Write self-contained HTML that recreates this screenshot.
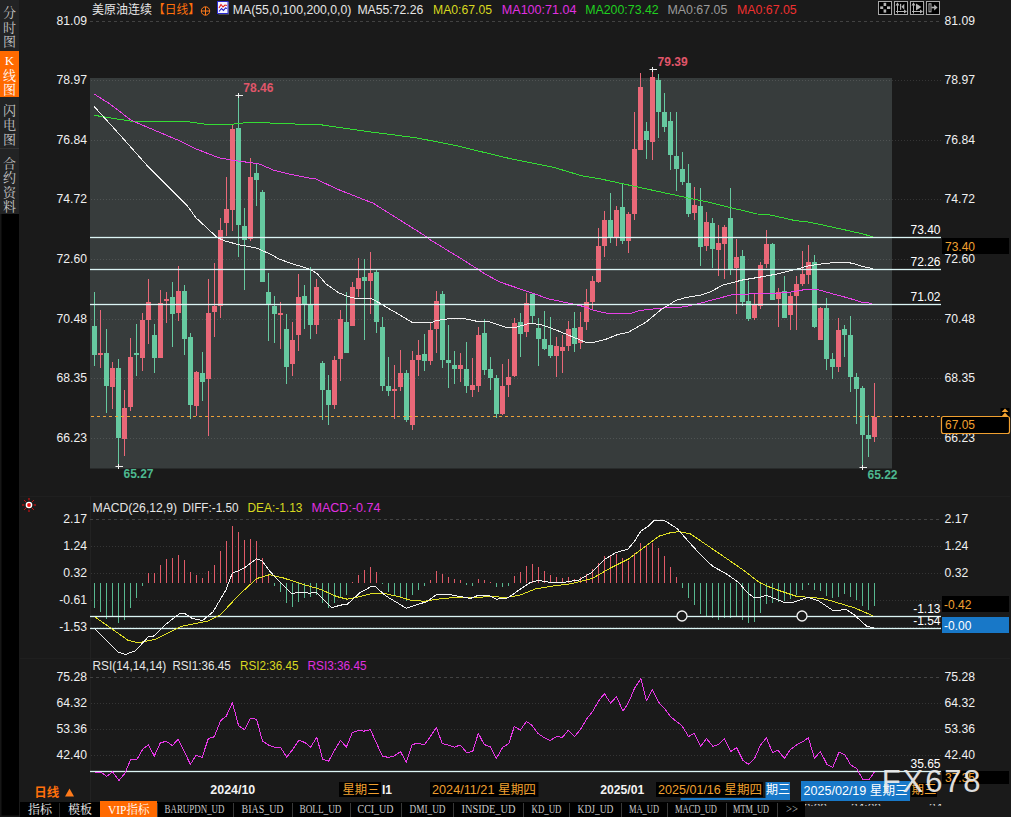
<!DOCTYPE html>
<html lang="zh"><head><meta charset="utf-8"><title>美原油连续 日线</title>
<style>
html,body{margin:0;padding:0;background:#1a1a1a;overflow:hidden}
svg{display:block}
text{font-family:"Liberation Sans","Noto Sans CJK SC",sans-serif;white-space:pre}
</style></head><body>
<svg width="1011" height="817" viewBox="0 0 1011 817">
<defs><clipPath id="cb"><rect x="780" y="804" width="231" height="1.8"/></clipPath></defs>
<rect x="0" y="0" width="1011" height="817" fill="#1a1a1a" />
<rect x="0" y="0" width="19" height="214" fill="#222324" />
<rect x="0" y="214" width="19" height="603" fill="#161616" />
<rect x="1.5" y="214" width="17.5" height="601.5" fill="#000" />
<rect x="0" y="51" width="19" height="46" fill="#ff6a00" />
<rect x="0" y="148" width="19" height="1" fill="#333" />
<text x="9.5" y="17" fill="#c8c8c8" font-size="13" text-anchor="middle" style="font-family:'Liberation Serif','Noto Serif CJK SC',serif" >分</text>
<text x="9.5" y="31.5" fill="#c8c8c8" font-size="13" text-anchor="middle" style="font-family:'Liberation Serif','Noto Serif CJK SC',serif" >时</text>
<text x="9.5" y="45.5" fill="#c8c8c8" font-size="13" text-anchor="middle" style="font-family:'Liberation Serif','Noto Serif CJK SC',serif" >图</text>
<text x="9.5" y="65" fill="#fff" font-size="13" text-anchor="middle" style="font-family:'Liberation Serif','Noto Serif CJK SC',serif" >K</text>
<text x="9.5" y="79.5" fill="#fff" font-size="13" text-anchor="middle" style="font-family:'Liberation Serif','Noto Serif CJK SC',serif" >线</text>
<text x="9.5" y="93.5" fill="#fff" font-size="13" text-anchor="middle" style="font-family:'Liberation Serif','Noto Serif CJK SC',serif" >图</text>
<text x="9.5" y="114.5" fill="#c8c8c8" font-size="13" text-anchor="middle" style="font-family:'Liberation Serif','Noto Serif CJK SC',serif" >闪</text>
<text x="9.5" y="129" fill="#c8c8c8" font-size="13" text-anchor="middle" style="font-family:'Liberation Serif','Noto Serif CJK SC',serif" >电</text>
<text x="9.5" y="143.5" fill="#c8c8c8" font-size="13" text-anchor="middle" style="font-family:'Liberation Serif','Noto Serif CJK SC',serif" >图</text>
<text x="9.5" y="167.5" fill="#c8c8c8" font-size="13" text-anchor="middle" style="font-family:'Liberation Serif','Noto Serif CJK SC',serif" >合</text>
<text x="9.5" y="182" fill="#c8c8c8" font-size="13" text-anchor="middle" style="font-family:'Liberation Serif','Noto Serif CJK SC',serif" >约</text>
<text x="9.5" y="196.5" fill="#c8c8c8" font-size="13" text-anchor="middle" style="font-family:'Liberation Serif','Noto Serif CJK SC',serif" >资</text>
<text x="9.5" y="211" fill="#c8c8c8" font-size="13" text-anchor="middle" style="font-family:'Liberation Serif','Noto Serif CJK SC',serif" >料</text>
<rect x="90" y="78" width="802" height="390.5" fill="#373c3c" />
<line x1="90" y1="21.5" x2="941" y2="21.5" stroke="#424242" stroke-width="1" stroke-dasharray="3 3" shape-rendering="crispEdges"/>
<line x1="91" y1="80.5" x2="942" y2="80.5" stroke="rgba(255,255,255,0.12)" stroke-width="1" stroke-dasharray="1 2" shape-rendering="crispEdges"/>
<line x1="91" y1="140.5" x2="942" y2="140.5" stroke="rgba(255,255,255,0.12)" stroke-width="1" stroke-dasharray="1 2" shape-rendering="crispEdges"/>
<line x1="91" y1="199.5" x2="942" y2="199.5" stroke="rgba(255,255,255,0.12)" stroke-width="1" stroke-dasharray="1 2" shape-rendering="crispEdges"/>
<line x1="91" y1="259.5" x2="942" y2="259.5" stroke="rgba(255,255,255,0.12)" stroke-width="1" stroke-dasharray="1 2" shape-rendering="crispEdges"/>
<line x1="91" y1="319.5" x2="942" y2="319.5" stroke="rgba(255,255,255,0.12)" stroke-width="1" stroke-dasharray="1 2" shape-rendering="crispEdges"/>
<line x1="91" y1="378.5" x2="942" y2="378.5" stroke="rgba(255,255,255,0.12)" stroke-width="1" stroke-dasharray="1 2" shape-rendering="crispEdges"/>
<line x1="91" y1="438.5" x2="942" y2="438.5" stroke="rgba(255,255,255,0.12)" stroke-width="1" stroke-dasharray="1 2" shape-rendering="crispEdges"/>
<text x="87" y="25" fill="#f0f0f0" font-size="12" text-anchor="end" textLength="30.45" lengthAdjust="spacingAndGlyphs" >81.09</text>
<text x="944.5" y="25" fill="#f0f0f0" font-size="12" textLength="30.45" lengthAdjust="spacingAndGlyphs" >81.09</text>
<text x="87" y="84" fill="#f0f0f0" font-size="12" text-anchor="end" textLength="30.45" lengthAdjust="spacingAndGlyphs" >78.97</text>
<text x="944.5" y="84" fill="#f0f0f0" font-size="12" textLength="30.45" lengthAdjust="spacingAndGlyphs" >78.97</text>
<text x="87" y="144" fill="#f0f0f0" font-size="12" text-anchor="end" textLength="30.45" lengthAdjust="spacingAndGlyphs" >76.84</text>
<text x="944.5" y="144" fill="#f0f0f0" font-size="12" textLength="30.45" lengthAdjust="spacingAndGlyphs" >76.84</text>
<text x="87" y="203" fill="#f0f0f0" font-size="12" text-anchor="end" textLength="30.45" lengthAdjust="spacingAndGlyphs" >74.72</text>
<text x="944.5" y="203" fill="#f0f0f0" font-size="12" textLength="30.45" lengthAdjust="spacingAndGlyphs" >74.72</text>
<text x="87" y="263" fill="#f0f0f0" font-size="12" text-anchor="end" textLength="30.45" lengthAdjust="spacingAndGlyphs" >72.60</text>
<text x="944.5" y="263" fill="#f0f0f0" font-size="12" textLength="30.45" lengthAdjust="spacingAndGlyphs" >72.60</text>
<text x="87" y="323" fill="#f0f0f0" font-size="12" text-anchor="end" textLength="30.45" lengthAdjust="spacingAndGlyphs" >70.48</text>
<text x="944.5" y="323" fill="#f0f0f0" font-size="12" textLength="30.45" lengthAdjust="spacingAndGlyphs" >70.48</text>
<text x="87" y="382" fill="#f0f0f0" font-size="12" text-anchor="end" textLength="30.45" lengthAdjust="spacingAndGlyphs" >68.35</text>
<text x="944.5" y="382" fill="#f0f0f0" font-size="12" textLength="30.45" lengthAdjust="spacingAndGlyphs" >68.35</text>
<text x="87" y="442" fill="#f0f0f0" font-size="12" text-anchor="end" textLength="30.45" lengthAdjust="spacingAndGlyphs" >66.23</text>
<text x="944.5" y="442" fill="#f0f0f0" font-size="12" textLength="30.45" lengthAdjust="spacingAndGlyphs" >66.23</text>
<rect x="94" y="292" width="1" height="74" fill="#66c9a0" shape-rendering="crispEdges"/>
<rect x="92" y="326" width="5" height="29" fill="#66c9a0" shape-rendering="crispEdges"/>
<rect x="100" y="310" width="1" height="58" fill="#e96878" shape-rendering="crispEdges"/>
<rect x="98" y="353" width="5" height="2" fill="#e96878" shape-rendering="crispEdges"/>
<rect x="106" y="329" width="1" height="84" fill="#66c9a0" shape-rendering="crispEdges"/>
<rect x="104" y="353" width="5" height="33" fill="#66c9a0" shape-rendering="crispEdges"/>
<rect x="112" y="362" width="1" height="47" fill="#e96878" shape-rendering="crispEdges"/>
<rect x="110" y="368" width="5" height="19" fill="#e96878" shape-rendering="crispEdges"/>
<rect x="118" y="359" width="1" height="107" fill="#66c9a0" shape-rendering="crispEdges"/>
<rect x="116" y="368" width="5" height="70" fill="#66c9a0" shape-rendering="crispEdges"/>
<rect x="124" y="390" width="1" height="66" fill="#e96878" shape-rendering="crispEdges"/>
<rect x="122" y="408" width="5" height="31" fill="#e96878" shape-rendering="crispEdges"/>
<rect x="130" y="338" width="1" height="73" fill="#e96878" shape-rendering="crispEdges"/>
<rect x="128" y="357" width="5" height="50" fill="#e96878" shape-rendering="crispEdges"/>
<rect x="136" y="324" width="1" height="52" fill="#66c9a0" shape-rendering="crispEdges"/>
<rect x="134" y="353" width="5" height="2" fill="#66c9a0" shape-rendering="crispEdges"/>
<rect x="142" y="313" width="1" height="58" fill="#e96878" shape-rendering="crispEdges"/>
<rect x="140" y="320" width="5" height="38" fill="#e96878" shape-rendering="crispEdges"/>
<rect x="148" y="279" width="1" height="65" fill="#e96878" shape-rendering="crispEdges"/>
<rect x="146" y="302" width="5" height="18" fill="#e96878" shape-rendering="crispEdges"/>
<rect x="154" y="324" width="1" height="49" fill="#66c9a0" shape-rendering="crispEdges"/>
<rect x="152" y="335" width="5" height="23" fill="#66c9a0" shape-rendering="crispEdges"/>
<rect x="160" y="290" width="1" height="68" fill="#e96878" shape-rendering="crispEdges"/>
<rect x="158" y="303" width="5" height="55" fill="#e96878" shape-rendering="crispEdges"/>
<rect x="166" y="292" width="1" height="31" fill="#e96878" shape-rendering="crispEdges"/>
<rect x="164" y="299" width="5" height="2" fill="#e96878" shape-rendering="crispEdges"/>
<rect x="172" y="282" width="1" height="65" fill="#66c9a0" shape-rendering="crispEdges"/>
<rect x="170" y="297" width="5" height="17" fill="#66c9a0" shape-rendering="crispEdges"/>
<rect x="178" y="266" width="1" height="55" fill="#e96878" shape-rendering="crispEdges"/>
<rect x="176" y="291" width="5" height="22" fill="#e96878" shape-rendering="crispEdges"/>
<rect x="184" y="285" width="1" height="70" fill="#66c9a0" shape-rendering="crispEdges"/>
<rect x="182" y="291" width="5" height="48" fill="#66c9a0" shape-rendering="crispEdges"/>
<rect x="190" y="333" width="1" height="86" fill="#66c9a0" shape-rendering="crispEdges"/>
<rect x="188" y="337" width="5" height="68" fill="#66c9a0" shape-rendering="crispEdges"/>
<rect x="196" y="371" width="1" height="45" fill="#e96878" shape-rendering="crispEdges"/>
<rect x="194" y="372" width="5" height="34" fill="#e96878" shape-rendering="crispEdges"/>
<rect x="202" y="352" width="1" height="49" fill="#66c9a0" shape-rendering="crispEdges"/>
<rect x="200" y="373" width="5" height="9" fill="#66c9a0" shape-rendering="crispEdges"/>
<rect x="208" y="279" width="1" height="157" fill="#e96878" shape-rendering="crispEdges"/>
<rect x="206" y="313" width="5" height="66" fill="#e96878" shape-rendering="crispEdges"/>
<rect x="214" y="263" width="1" height="74" fill="#e96878" shape-rendering="crispEdges"/>
<rect x="212" y="306" width="5" height="6" fill="#e96878" shape-rendering="crispEdges"/>
<rect x="220" y="218" width="1" height="100" fill="#e96878" shape-rendering="crispEdges"/>
<rect x="218" y="230" width="5" height="76" fill="#e96878" shape-rendering="crispEdges"/>
<rect x="226" y="177" width="1" height="59" fill="#e96878" shape-rendering="crispEdges"/>
<rect x="224" y="209" width="5" height="14" fill="#e96878" shape-rendering="crispEdges"/>
<rect x="232" y="125" width="1" height="106" fill="#e96878" shape-rendering="crispEdges"/>
<rect x="230" y="129" width="5" height="81" fill="#e96878" shape-rendering="crispEdges"/>
<rect x="238" y="95" width="1" height="162" fill="#66c9a0" shape-rendering="crispEdges"/>
<rect x="236" y="128" width="5" height="97" fill="#66c9a0" shape-rendering="crispEdges"/>
<rect x="244" y="208" width="1" height="82" fill="#66c9a0" shape-rendering="crispEdges"/>
<rect x="242" y="226" width="5" height="14" fill="#66c9a0" shape-rendering="crispEdges"/>
<rect x="250" y="158" width="1" height="83" fill="#e96878" shape-rendering="crispEdges"/>
<rect x="248" y="177" width="5" height="62" fill="#e96878" shape-rendering="crispEdges"/>
<rect x="256" y="164" width="1" height="42" fill="#66c9a0" shape-rendering="crispEdges"/>
<rect x="254" y="173" width="5" height="7" fill="#66c9a0" shape-rendering="crispEdges"/>
<rect x="262" y="190" width="1" height="92" fill="#66c9a0" shape-rendering="crispEdges"/>
<rect x="260" y="192" width="5" height="90" fill="#66c9a0" shape-rendering="crispEdges"/>
<rect x="268" y="273" width="1" height="68" fill="#66c9a0" shape-rendering="crispEdges"/>
<rect x="266" y="292" width="5" height="12" fill="#66c9a0" shape-rendering="crispEdges"/>
<rect x="274" y="296" width="1" height="47" fill="#66c9a0" shape-rendering="crispEdges"/>
<rect x="272" y="306" width="5" height="8" fill="#66c9a0" shape-rendering="crispEdges"/>
<rect x="280" y="302" width="1" height="47" fill="#e96878" shape-rendering="crispEdges"/>
<rect x="278" y="313" width="5" height="2" fill="#e96878" shape-rendering="crispEdges"/>
<rect x="286" y="314" width="1" height="70" fill="#66c9a0" shape-rendering="crispEdges"/>
<rect x="284" y="329" width="5" height="38" fill="#66c9a0" shape-rendering="crispEdges"/>
<rect x="292" y="322" width="1" height="54" fill="#e96878" shape-rendering="crispEdges"/>
<rect x="290" y="340" width="5" height="24" fill="#e96878" shape-rendering="crispEdges"/>
<rect x="298" y="274" width="1" height="77" fill="#e96878" shape-rendering="crispEdges"/>
<rect x="296" y="297" width="5" height="38" fill="#e96878" shape-rendering="crispEdges"/>
<rect x="304" y="285" width="1" height="44" fill="#66c9a0" shape-rendering="crispEdges"/>
<rect x="302" y="296" width="5" height="8" fill="#66c9a0" shape-rendering="crispEdges"/>
<rect x="310" y="267" width="1" height="72" fill="#66c9a0" shape-rendering="crispEdges"/>
<rect x="308" y="304" width="5" height="21" fill="#66c9a0" shape-rendering="crispEdges"/>
<rect x="316" y="279" width="1" height="55" fill="#e96878" shape-rendering="crispEdges"/>
<rect x="314" y="287" width="5" height="38" fill="#e96878" shape-rendering="crispEdges"/>
<rect x="322" y="361" width="1" height="59" fill="#66c9a0" shape-rendering="crispEdges"/>
<rect x="320" y="363" width="5" height="27" fill="#66c9a0" shape-rendering="crispEdges"/>
<rect x="328" y="375" width="1" height="50" fill="#66c9a0" shape-rendering="crispEdges"/>
<rect x="326" y="390" width="5" height="15" fill="#66c9a0" shape-rendering="crispEdges"/>
<rect x="334" y="356" width="1" height="53" fill="#e96878" shape-rendering="crispEdges"/>
<rect x="332" y="360" width="5" height="45" fill="#e96878" shape-rendering="crispEdges"/>
<rect x="340" y="310" width="1" height="71" fill="#e96878" shape-rendering="crispEdges"/>
<rect x="338" y="319" width="5" height="40" fill="#e96878" shape-rendering="crispEdges"/>
<rect x="346" y="292" width="1" height="61" fill="#66c9a0" shape-rendering="crispEdges"/>
<rect x="344" y="322" width="5" height="31" fill="#66c9a0" shape-rendering="crispEdges"/>
<rect x="352" y="282" width="1" height="44" fill="#e96878" shape-rendering="crispEdges"/>
<rect x="350" y="287" width="5" height="39" fill="#e96878" shape-rendering="crispEdges"/>
<rect x="358" y="258" width="1" height="39" fill="#e96878" shape-rendering="crispEdges"/>
<rect x="356" y="278" width="5" height="11" fill="#e96878" shape-rendering="crispEdges"/>
<rect x="364" y="259" width="1" height="81" fill="#66c9a0" shape-rendering="crispEdges"/>
<rect x="362" y="277" width="5" height="4" fill="#66c9a0" shape-rendering="crispEdges"/>
<rect x="370" y="252" width="1" height="62" fill="#e96878" shape-rendering="crispEdges"/>
<rect x="368" y="273" width="5" height="8" fill="#e96878" shape-rendering="crispEdges"/>
<rect x="376" y="270" width="1" height="63" fill="#66c9a0" shape-rendering="crispEdges"/>
<rect x="374" y="272" width="5" height="50" fill="#66c9a0" shape-rendering="crispEdges"/>
<rect x="382" y="317" width="1" height="74" fill="#66c9a0" shape-rendering="crispEdges"/>
<rect x="380" y="327" width="5" height="59" fill="#66c9a0" shape-rendering="crispEdges"/>
<rect x="388" y="357" width="1" height="39" fill="#66c9a0" shape-rendering="crispEdges"/>
<rect x="386" y="386" width="5" height="5" fill="#66c9a0" shape-rendering="crispEdges"/>
<rect x="394" y="365" width="1" height="54" fill="#e96878" shape-rendering="crispEdges"/>
<rect x="392" y="389" width="5" height="2" fill="#e96878" shape-rendering="crispEdges"/>
<rect x="400" y="350" width="1" height="41" fill="#e96878" shape-rendering="crispEdges"/>
<rect x="398" y="373" width="5" height="14" fill="#e96878" shape-rendering="crispEdges"/>
<rect x="406" y="370" width="1" height="52" fill="#66c9a0" shape-rendering="crispEdges"/>
<rect x="404" y="373" width="5" height="47" fill="#66c9a0" shape-rendering="crispEdges"/>
<rect x="412" y="351" width="1" height="79" fill="#e96878" shape-rendering="crispEdges"/>
<rect x="410" y="360" width="5" height="65" fill="#e96878" shape-rendering="crispEdges"/>
<rect x="418" y="340" width="1" height="36" fill="#e96878" shape-rendering="crispEdges"/>
<rect x="416" y="355" width="5" height="5" fill="#e96878" shape-rendering="crispEdges"/>
<rect x="424" y="334" width="1" height="37" fill="#66c9a0" shape-rendering="crispEdges"/>
<rect x="422" y="354" width="5" height="7" fill="#66c9a0" shape-rendering="crispEdges"/>
<rect x="430" y="323" width="1" height="42" fill="#e96878" shape-rendering="crispEdges"/>
<rect x="428" y="330" width="5" height="31" fill="#e96878" shape-rendering="crispEdges"/>
<rect x="436" y="291" width="1" height="62" fill="#e96878" shape-rendering="crispEdges"/>
<rect x="434" y="301" width="5" height="28" fill="#e96878" shape-rendering="crispEdges"/>
<rect x="442" y="291" width="1" height="77" fill="#66c9a0" shape-rendering="crispEdges"/>
<rect x="440" y="294" width="5" height="66" fill="#66c9a0" shape-rendering="crispEdges"/>
<rect x="448" y="325" width="1" height="63" fill="#66c9a0" shape-rendering="crispEdges"/>
<rect x="446" y="360" width="5" height="3" fill="#66c9a0" shape-rendering="crispEdges"/>
<rect x="454" y="351" width="1" height="33" fill="#66c9a0" shape-rendering="crispEdges"/>
<rect x="452" y="365" width="5" height="4" fill="#66c9a0" shape-rendering="crispEdges"/>
<rect x="460" y="353" width="1" height="29" fill="#e96878" shape-rendering="crispEdges"/>
<rect x="458" y="365" width="5" height="4" fill="#e96878" shape-rendering="crispEdges"/>
<rect x="466" y="342" width="1" height="51" fill="#66c9a0" shape-rendering="crispEdges"/>
<rect x="464" y="369" width="5" height="17" fill="#66c9a0" shape-rendering="crispEdges"/>
<rect x="472" y="358" width="1" height="39" fill="#e96878" shape-rendering="crispEdges"/>
<rect x="470" y="385" width="5" height="5" fill="#e96878" shape-rendering="crispEdges"/>
<rect x="478" y="327" width="1" height="65" fill="#e96878" shape-rendering="crispEdges"/>
<rect x="476" y="335" width="5" height="51" fill="#e96878" shape-rendering="crispEdges"/>
<rect x="484" y="319" width="1" height="56" fill="#66c9a0" shape-rendering="crispEdges"/>
<rect x="482" y="333" width="5" height="37" fill="#66c9a0" shape-rendering="crispEdges"/>
<rect x="490" y="357" width="1" height="33" fill="#66c9a0" shape-rendering="crispEdges"/>
<rect x="488" y="369" width="5" height="9" fill="#66c9a0" shape-rendering="crispEdges"/>
<rect x="496" y="375" width="1" height="43" fill="#66c9a0" shape-rendering="crispEdges"/>
<rect x="494" y="378" width="5" height="36" fill="#66c9a0" shape-rendering="crispEdges"/>
<rect x="502" y="364" width="1" height="51" fill="#e96878" shape-rendering="crispEdges"/>
<rect x="500" y="386" width="5" height="28" fill="#e96878" shape-rendering="crispEdges"/>
<rect x="508" y="359" width="1" height="38" fill="#e96878" shape-rendering="crispEdges"/>
<rect x="506" y="377" width="5" height="8" fill="#e96878" shape-rendering="crispEdges"/>
<rect x="514" y="318" width="1" height="59" fill="#e96878" shape-rendering="crispEdges"/>
<rect x="512" y="323" width="5" height="53" fill="#e96878" shape-rendering="crispEdges"/>
<rect x="520" y="313" width="1" height="44" fill="#66c9a0" shape-rendering="crispEdges"/>
<rect x="518" y="322" width="5" height="12" fill="#66c9a0" shape-rendering="crispEdges"/>
<rect x="526" y="293" width="1" height="44" fill="#e96878" shape-rendering="crispEdges"/>
<rect x="524" y="303" width="5" height="29" fill="#e96878" shape-rendering="crispEdges"/>
<rect x="532" y="294" width="1" height="29" fill="#66c9a0" shape-rendering="crispEdges"/>
<rect x="530" y="294" width="5" height="22" fill="#66c9a0" shape-rendering="crispEdges"/>
<rect x="538" y="318" width="1" height="48" fill="#66c9a0" shape-rendering="crispEdges"/>
<rect x="536" y="328" width="5" height="11" fill="#66c9a0" shape-rendering="crispEdges"/>
<rect x="544" y="311" width="1" height="39" fill="#66c9a0" shape-rendering="crispEdges"/>
<rect x="542" y="339" width="5" height="10" fill="#66c9a0" shape-rendering="crispEdges"/>
<rect x="550" y="317" width="1" height="41" fill="#66c9a0" shape-rendering="crispEdges"/>
<rect x="548" y="345" width="5" height="11" fill="#66c9a0" shape-rendering="crispEdges"/>
<rect x="556" y="337" width="1" height="40" fill="#e96878" shape-rendering="crispEdges"/>
<rect x="554" y="346" width="5" height="10" fill="#e96878" shape-rendering="crispEdges"/>
<rect x="562" y="335" width="1" height="38" fill="#e96878" shape-rendering="crispEdges"/>
<rect x="560" y="347" width="5" height="4" fill="#e96878" shape-rendering="crispEdges"/>
<rect x="568" y="321" width="1" height="30" fill="#e96878" shape-rendering="crispEdges"/>
<rect x="566" y="329" width="5" height="17" fill="#e96878" shape-rendering="crispEdges"/>
<rect x="574" y="312" width="1" height="40" fill="#66c9a0" shape-rendering="crispEdges"/>
<rect x="572" y="328" width="5" height="16" fill="#66c9a0" shape-rendering="crispEdges"/>
<rect x="580" y="312" width="1" height="37" fill="#e96878" shape-rendering="crispEdges"/>
<rect x="578" y="327" width="5" height="16" fill="#e96878" shape-rendering="crispEdges"/>
<rect x="586" y="289" width="1" height="41" fill="#e96878" shape-rendering="crispEdges"/>
<rect x="584" y="302" width="5" height="20" fill="#e96878" shape-rendering="crispEdges"/>
<rect x="592" y="276" width="1" height="33" fill="#e96878" shape-rendering="crispEdges"/>
<rect x="590" y="281" width="5" height="21" fill="#e96878" shape-rendering="crispEdges"/>
<rect x="598" y="228" width="1" height="55" fill="#e96878" shape-rendering="crispEdges"/>
<rect x="596" y="246" width="5" height="36" fill="#e96878" shape-rendering="crispEdges"/>
<rect x="604" y="211" width="1" height="46" fill="#e96878" shape-rendering="crispEdges"/>
<rect x="602" y="220" width="5" height="26" fill="#e96878" shape-rendering="crispEdges"/>
<rect x="610" y="193" width="1" height="50" fill="#66c9a0" shape-rendering="crispEdges"/>
<rect x="608" y="220" width="5" height="18" fill="#66c9a0" shape-rendering="crispEdges"/>
<rect x="616" y="206" width="1" height="40" fill="#e96878" shape-rendering="crispEdges"/>
<rect x="614" y="210" width="5" height="28" fill="#e96878" shape-rendering="crispEdges"/>
<rect x="622" y="183" width="1" height="61" fill="#66c9a0" shape-rendering="crispEdges"/>
<rect x="620" y="207" width="5" height="34" fill="#66c9a0" shape-rendering="crispEdges"/>
<rect x="628" y="212" width="1" height="41" fill="#e96878" shape-rendering="crispEdges"/>
<rect x="626" y="214" width="5" height="27" fill="#e96878" shape-rendering="crispEdges"/>
<rect x="634" y="112" width="1" height="108" fill="#e96878" shape-rendering="crispEdges"/>
<rect x="632" y="149" width="5" height="65" fill="#e96878" shape-rendering="crispEdges"/>
<rect x="640" y="73" width="1" height="77" fill="#e96878" shape-rendering="crispEdges"/>
<rect x="638" y="87" width="5" height="63" fill="#e96878" shape-rendering="crispEdges"/>
<rect x="646" y="122" width="1" height="37" fill="#66c9a0" shape-rendering="crispEdges"/>
<rect x="644" y="131" width="5" height="9" fill="#66c9a0" shape-rendering="crispEdges"/>
<rect x="652" y="68" width="1" height="92" fill="#e96878" shape-rendering="crispEdges"/>
<rect x="650" y="77" width="5" height="65" fill="#e96878" shape-rendering="crispEdges"/>
<rect x="658" y="74" width="1" height="64" fill="#66c9a0" shape-rendering="crispEdges"/>
<rect x="656" y="80" width="5" height="32" fill="#66c9a0" shape-rendering="crispEdges"/>
<rect x="664" y="93" width="1" height="39" fill="#66c9a0" shape-rendering="crispEdges"/>
<rect x="662" y="112" width="5" height="15" fill="#66c9a0" shape-rendering="crispEdges"/>
<rect x="670" y="112" width="1" height="58" fill="#66c9a0" shape-rendering="crispEdges"/>
<rect x="668" y="121" width="5" height="34" fill="#66c9a0" shape-rendering="crispEdges"/>
<rect x="676" y="112" width="1" height="79" fill="#66c9a0" shape-rendering="crispEdges"/>
<rect x="674" y="156" width="5" height="13" fill="#66c9a0" shape-rendering="crispEdges"/>
<rect x="682" y="152" width="1" height="33" fill="#66c9a0" shape-rendering="crispEdges"/>
<rect x="680" y="169" width="5" height="13" fill="#66c9a0" shape-rendering="crispEdges"/>
<rect x="688" y="164" width="1" height="53" fill="#66c9a0" shape-rendering="crispEdges"/>
<rect x="686" y="183" width="5" height="31" fill="#66c9a0" shape-rendering="crispEdges"/>
<rect x="694" y="187" width="1" height="33" fill="#e96878" shape-rendering="crispEdges"/>
<rect x="692" y="205" width="5" height="8" fill="#e96878" shape-rendering="crispEdges"/>
<rect x="700" y="188" width="1" height="78" fill="#66c9a0" shape-rendering="crispEdges"/>
<rect x="698" y="206" width="5" height="41" fill="#66c9a0" shape-rendering="crispEdges"/>
<rect x="706" y="212" width="1" height="39" fill="#e96878" shape-rendering="crispEdges"/>
<rect x="704" y="222" width="5" height="24" fill="#e96878" shape-rendering="crispEdges"/>
<rect x="712" y="218" width="1" height="50" fill="#66c9a0" shape-rendering="crispEdges"/>
<rect x="710" y="223" width="5" height="26" fill="#66c9a0" shape-rendering="crispEdges"/>
<rect x="718" y="225" width="1" height="51" fill="#e96878" shape-rendering="crispEdges"/>
<rect x="716" y="243" width="5" height="7" fill="#e96878" shape-rendering="crispEdges"/>
<rect x="724" y="225" width="1" height="54" fill="#e96878" shape-rendering="crispEdges"/>
<rect x="722" y="227" width="5" height="17" fill="#e96878" shape-rendering="crispEdges"/>
<rect x="730" y="188" width="1" height="87" fill="#66c9a0" shape-rendering="crispEdges"/>
<rect x="728" y="218" width="5" height="51" fill="#66c9a0" shape-rendering="crispEdges"/>
<rect x="736" y="239" width="1" height="75" fill="#e96878" shape-rendering="crispEdges"/>
<rect x="734" y="257" width="5" height="11" fill="#e96878" shape-rendering="crispEdges"/>
<rect x="742" y="250" width="1" height="56" fill="#66c9a0" shape-rendering="crispEdges"/>
<rect x="740" y="256" width="5" height="46" fill="#66c9a0" shape-rendering="crispEdges"/>
<rect x="748" y="281" width="1" height="40" fill="#66c9a0" shape-rendering="crispEdges"/>
<rect x="746" y="301" width="5" height="18" fill="#66c9a0" shape-rendering="crispEdges"/>
<rect x="754" y="293" width="1" height="27" fill="#e96878" shape-rendering="crispEdges"/>
<rect x="752" y="305" width="5" height="13" fill="#e96878" shape-rendering="crispEdges"/>
<rect x="760" y="262" width="1" height="47" fill="#e96878" shape-rendering="crispEdges"/>
<rect x="758" y="265" width="5" height="41" fill="#e96878" shape-rendering="crispEdges"/>
<rect x="766" y="230" width="1" height="38" fill="#e96878" shape-rendering="crispEdges"/>
<rect x="764" y="244" width="5" height="20" fill="#e96878" shape-rendering="crispEdges"/>
<rect x="772" y="243" width="1" height="57" fill="#66c9a0" shape-rendering="crispEdges"/>
<rect x="770" y="244" width="5" height="56" fill="#66c9a0" shape-rendering="crispEdges"/>
<rect x="778" y="288" width="1" height="39" fill="#e96878" shape-rendering="crispEdges"/>
<rect x="776" y="292" width="5" height="7" fill="#e96878" shape-rendering="crispEdges"/>
<rect x="784" y="276" width="1" height="42" fill="#66c9a0" shape-rendering="crispEdges"/>
<rect x="782" y="291" width="5" height="27" fill="#66c9a0" shape-rendering="crispEdges"/>
<rect x="790" y="293" width="1" height="37" fill="#e96878" shape-rendering="crispEdges"/>
<rect x="788" y="296" width="5" height="19" fill="#e96878" shape-rendering="crispEdges"/>
<rect x="796" y="276" width="1" height="54" fill="#e96878" shape-rendering="crispEdges"/>
<rect x="794" y="284" width="5" height="12" fill="#e96878" shape-rendering="crispEdges"/>
<rect x="802" y="251" width="1" height="35" fill="#e96878" shape-rendering="crispEdges"/>
<rect x="800" y="274" width="5" height="10" fill="#e96878" shape-rendering="crispEdges"/>
<rect x="808" y="245" width="1" height="39" fill="#e96878" shape-rendering="crispEdges"/>
<rect x="806" y="262" width="5" height="13" fill="#e96878" shape-rendering="crispEdges"/>
<rect x="814" y="255" width="1" height="73" fill="#66c9a0" shape-rendering="crispEdges"/>
<rect x="812" y="262" width="5" height="65" fill="#66c9a0" shape-rendering="crispEdges"/>
<rect x="820" y="307" width="1" height="33" fill="#e96878" shape-rendering="crispEdges"/>
<rect x="818" y="308" width="5" height="32" fill="#e96878" shape-rendering="crispEdges"/>
<rect x="826" y="298" width="1" height="72" fill="#66c9a0" shape-rendering="crispEdges"/>
<rect x="824" y="308" width="5" height="51" fill="#66c9a0" shape-rendering="crispEdges"/>
<rect x="832" y="353" width="1" height="26" fill="#66c9a0" shape-rendering="crispEdges"/>
<rect x="830" y="359" width="5" height="8" fill="#66c9a0" shape-rendering="crispEdges"/>
<rect x="838" y="318" width="1" height="54" fill="#e96878" shape-rendering="crispEdges"/>
<rect x="836" y="330" width="5" height="37" fill="#e96878" shape-rendering="crispEdges"/>
<rect x="844" y="325" width="1" height="32" fill="#66c9a0" shape-rendering="crispEdges"/>
<rect x="842" y="329" width="5" height="6" fill="#66c9a0" shape-rendering="crispEdges"/>
<rect x="850" y="316" width="1" height="76" fill="#66c9a0" shape-rendering="crispEdges"/>
<rect x="848" y="335" width="5" height="42" fill="#66c9a0" shape-rendering="crispEdges"/>
<rect x="856" y="373" width="1" height="51" fill="#66c9a0" shape-rendering="crispEdges"/>
<rect x="854" y="377" width="5" height="12" fill="#66c9a0" shape-rendering="crispEdges"/>
<rect x="862" y="386" width="1" height="82" fill="#66c9a0" shape-rendering="crispEdges"/>
<rect x="860" y="388" width="5" height="47" fill="#66c9a0" shape-rendering="crispEdges"/>
<rect x="868" y="415" width="1" height="42" fill="#66c9a0" shape-rendering="crispEdges"/>
<rect x="866" y="435" width="5" height="4" fill="#66c9a0" shape-rendering="crispEdges"/>
<rect x="874" y="383" width="1" height="59" fill="#e96878" shape-rendering="crispEdges"/>
<rect x="872" y="417" width="5" height="20" fill="#e96878" shape-rendering="crispEdges"/>
<path d="M94 115.3 L131.3 121.2 L187.8 121.7 L205.8 124.3 L231.5 124.3 L249.5 122.2 L285 123.6 L300 124.2 L319 124.4 L326 125.6 L367.4 131.5 L416.1 137.8 L453.4 145 L510.8 158.8 L553.8 167.4 L582.5 176 L600 178.8 L634.9 186.4 L688.9 198.1 L710 202.5 L731.7 207.9 L757.4 214 L770.3 215 L796 220.8 L805.5 221.4 L824.5 225.4 L842.8 229.4 L861.2 233.6 L873 236.7" fill="none" stroke="#34dc34" stroke-width="1" stroke-linejoin="round" shape-rendering="crispEdges"/>
<path d="M94 93.9 L110 104 L131.3 120.4 L180 141 L196 148.9 L218.7 157.7 L232 160.2 L256 163.4 L259.8 164.1 L273.2 170 L285 173.1 L310 178.3 L315.7 178.8 L326 183.8 L338.7 189.7 L373.1 203.2 L424.7 235.6 L430.6 240 L462 259.2 L486 274.5 L500 282.1 L532.3 293.1 L549 299 L571.5 303.7 L580 305.6 L586 307.2 L593.7 310.4 L609.1 313.6 L629.7 313.6 L640 310.4 L663.1 308 L683.7 306.9 L699.2 303.5 L710 300.5 L731.7 294.9 L757.4 293.6 L785.7 292.9 L800 290.5 L806 289.3 L817 289.3 L830.6 293.3 L849 298.2 L861.2 302.1 L872.5 303.4" fill="none" stroke="#e840e8" stroke-width="1" stroke-linejoin="round" shape-rendering="crispEdges"/>
<path d="M94 106.3 L120 135 L149.3 168 L187.8 206.5 L196 217.8 L217.2 237.5 L225 241 L238.4 244.6 L257.7 248.4 L272 255 L278.3 258.7 L292.6 264 L298.9 265.8 L310.6 269.4 L317.5 274 L326 283.9 L338.9 292.9 L347.9 296.4 L356.9 298.7 L371.4 298.5 L381.7 304.3 L412.6 322.6 L431.9 322.6 L435.7 320.7 L451.2 318.4 L462.7 318.4 L476.9 321.3 L487.6 321.2 L506.9 327.6 L517 327 L530 323.1 L542.9 325.1 L558.3 330.9 L573.7 337.3 L585.3 342.2 L594.3 342.2 L606 339.2 L618.1 334.4 L628.4 332.2 L646.4 321.9 L660.6 310 L676 300.3 L686.3 297.5 L701.7 294.9 L710 292 L722.7 285.2 L742 280.1 L760 277.1 L775.4 274.3 L796 269.4 L806 266.4 L818.4 264.3 L824.5 263.6 L835.5 262.4 L847.7 262.4 L855.1 264 L863.6 266.8 L872.5 268.6" fill="none" stroke="#f0f0f0" stroke-width="1" stroke-linejoin="round" shape-rendering="crispEdges"/>
<rect x="90" y="236.85" width="851" height="1.3" fill="#dcf5f5" />
<text x="940.5" y="234" fill="#fff" font-size="12" text-anchor="end" >73.40</text>
<rect x="90" y="268.85" width="851" height="1.3" fill="#dcf5f5" />
<text x="940.5" y="266" fill="#fff" font-size="12" text-anchor="end" >72.26</text>
<rect x="90" y="303.85" width="851" height="1.3" fill="#dcf5f5" />
<text x="940.5" y="301" fill="#fff" font-size="12" text-anchor="end" >71.02</text>
<line x1="91" y1="416.5" x2="941" y2="416.5" stroke="#eea23a" stroke-width="1" stroke-dasharray="3 3" shape-rendering="crispEdges"/>
<path d="M235.5 95.5 H243.0 M238.5 93.0 V98.0" stroke="#f0f0f0" stroke-width="1" fill="none"/>
<path d="M649.5 69.5 H657.0 M652.5 67.0 V72.0" stroke="#f0f0f0" stroke-width="1" fill="none"/>
<path d="M115.5 466.5 H123.0 M118.5 464.0 V469.0" stroke="#f0f0f0" stroke-width="1" fill="none"/>
<path d="M859.5 467.5 H867.0 M862.5 465.0 V470.0" stroke="#f0f0f0" stroke-width="1" fill="none"/>
<text x="243.3" y="91.5" fill="#e0566a" font-size="12" font-weight="bold" >78.46</text>
<text x="657.6" y="66" fill="#e0566a" font-size="12" font-weight="bold" >79.39</text>
<text x="123.5" y="477.5" fill="#4db890" font-size="12" font-weight="bold" >65.27</text>
<text x="867.5" y="479" fill="#4db890" font-size="12" font-weight="bold" >65.22</text>
<rect x="942" y="238" width="67" height="16" fill="#000" />
<text x="945" y="250.5" fill="#f0a030" font-size="12" >73.40</text>
<rect x="1000.5" y="408" width="9" height="9" fill="#000" />
<path d="M1001.5 412 L1005 408.5 L1008.5 412 Z M1001.5 416.5 L1005 412.5 L1008.5 416.5 Z" fill="#f0a030"/>
<rect x="941.5" y="416.5" width="68" height="17" rx="2" fill="#000" stroke="#f0a030" stroke-width="1.2"/>
<text x="945" y="429" fill="#f0a030" font-size="12" >67.05</text>
<text x="92" y="14" fill="#e6e6e6" font-size="12" textLength="60" lengthAdjust="spacingAndGlyphs" >美原油连续</text>
<text x="153" y="14" fill="#ff700c" font-size="12" textLength="47" lengthAdjust="spacingAndGlyphs" >【日线】</text>
<g stroke="#ff7a1a" stroke-width="1" fill="none"><circle cx="205.5" cy="11" r="4.2"/><path d="M201.3 11 H209.7 M205.5 6.8 V15.2"/></g>
<g><rect x="218.5" y="2" width="10.5" height="12.5" fill="#777"/><rect x="217.5" y="1.5" width="10.5" height="12" fill="#f4f4ff" stroke="#2a2ad0" stroke-width="1"/><path d="M219 8 L221 4.5 L223 7 L225 5 L227 5.5" stroke="#e02020" stroke-width="1.1" fill="none"/><path d="M219 11.5 L221.5 8.5 L223.5 10.5 L225.5 8 L227 8.5" stroke="#2020c0" stroke-width="1.1" fill="none"/></g>
<text x="232.8" y="14" fill="#e6e6e6" font-size="12" textLength="118.6" lengthAdjust="spacingAndGlyphs" >MA(55,0,100,200,0,0)</text>
<text x="357.4" y="14" fill="#e6e6e6" font-size="12" textLength="66" lengthAdjust="spacingAndGlyphs" >MA55:72.26</text>
<text x="433" y="14" fill="#d8d820" font-size="12" textLength="59" lengthAdjust="spacingAndGlyphs" >MA0:67.05</text>
<text x="501.8" y="14" fill="#e030e0" font-size="12" textLength="74.7" lengthAdjust="spacingAndGlyphs" >MA100:71.04</text>
<text x="585.2" y="14" fill="#20d020" font-size="12" textLength="73.5" lengthAdjust="spacingAndGlyphs" >MA200:73.42</text>
<text x="667.4" y="14" fill="#9a9a9a" font-size="12" textLength="60" lengthAdjust="spacingAndGlyphs" >MA0:67.05</text>
<text x="737" y="14" fill="#f03030" font-size="12" textLength="59.7" lengthAdjust="spacingAndGlyphs" >MA0:67.05</text>
<rect x="878.5" y="1.5" width="13" height="13" fill="#000" stroke="#a8a8a8" stroke-width="1"/>
<rect x="894.5" y="1.5" width="13" height="13" fill="#000" stroke="#a8a8a8" stroke-width="1"/>
<rect x="910.5" y="1.5" width="13" height="13" fill="#000" stroke="#a8a8a8" stroke-width="1"/>
<rect x="926.5" y="1.5" width="13" height="13" fill="#000" stroke="#a8a8a8" stroke-width="1"/>
<g fill="#b4b4b4"><rect x="883.6" y="2.8" width="2.6" height="3.2"/><rect x="883.6" y="9.4" width="2.6" height="3.2"/><rect x="880.2" y="6.4" width="3" height="2.6"/><rect x="887" y="6.4" width="3.2" height="2.6"/><rect x="897" y="4" width="1" height="9.5"/><path d="M895.5 5.5 L897.5 2.3 L899.5 5.5 Z"/><rect x="896" y="11" width="9" height="1"/><path d="M904 9.5 L907 11.5 L904 13.5 Z"/><rect x="900" y="3.8" width="1.2" height="6"/><path d="M904.3 3.8 L901.4 6.8 L904.3 9.8 Z"/><rect x="913" y="4" width="1" height="9.5"/><path d="M911.5 5.5 L913.5 2.3 L915.5 5.5 Z"/><rect x="912" y="11" width="9" height="1"/><path d="M920 9.5 L923 11.5 L920 13.5 Z"/><path d="M916 3.6 L921.4 7 L916 10.4 Z"/><rect x="929" y="3.8" width="2" height="8" fill="none" stroke="#b4b4b4" stroke-width="1"/><rect x="931.5" y="6.7" width="3.5" height="1.6"/><path d="M934.2 4.6 L937.6 7.5 L934.2 10.4 Z"/></g>
<rect x="20" y="496" width="990" height="1" fill="#1f1f1f" />
<rect x="20" y="658" width="990" height="1" fill="#1f1f1f" />
<rect x="90" y="496" width="1" height="306" fill="#222" />
<line x1="90" y1="519.5" x2="941" y2="519.5" stroke="#424242" stroke-width="1" stroke-dasharray="3 3" shape-rendering="crispEdges"/>
<line x1="91" y1="546.5" x2="942" y2="546.5" stroke="rgba(255,255,255,0.12)" stroke-width="1" stroke-dasharray="1 2" shape-rendering="crispEdges"/>
<line x1="91" y1="573.5" x2="942" y2="573.5" stroke="rgba(255,255,255,0.12)" stroke-width="1" stroke-dasharray="1 2" shape-rendering="crispEdges"/>
<line x1="91" y1="600.5" x2="942" y2="600.5" stroke="rgba(255,255,255,0.12)" stroke-width="1" stroke-dasharray="1 2" shape-rendering="crispEdges"/>
<line x1="91" y1="627.5" x2="942" y2="627.5" stroke="rgba(255,255,255,0.12)" stroke-width="1" stroke-dasharray="1 2" shape-rendering="crispEdges"/>
<text x="87" y="523" fill="#f0f0f0" font-size="12" text-anchor="end" textLength="23.7" lengthAdjust="spacingAndGlyphs" >2.17</text>
<text x="87" y="550" fill="#f0f0f0" font-size="12" text-anchor="end" textLength="23.7" lengthAdjust="spacingAndGlyphs" >1.24</text>
<text x="87" y="577" fill="#f0f0f0" font-size="12" text-anchor="end" textLength="23.7" lengthAdjust="spacingAndGlyphs" >0.32</text>
<text x="87" y="604" fill="#f0f0f0" font-size="12" text-anchor="end" textLength="27.8" lengthAdjust="spacingAndGlyphs" >-0.61</text>
<text x="87" y="631" fill="#f0f0f0" font-size="12" text-anchor="end" textLength="27.8" lengthAdjust="spacingAndGlyphs" >-1.53</text>
<text x="944.5" y="523" fill="#f0f0f0" font-size="12" textLength="23.7" lengthAdjust="spacingAndGlyphs" >2.17</text>
<text x="944.5" y="550" fill="#f0f0f0" font-size="12" textLength="23.7" lengthAdjust="spacingAndGlyphs" >1.24</text>
<text x="944.5" y="577" fill="#f0f0f0" font-size="12" textLength="23.7" lengthAdjust="spacingAndGlyphs" >0.32</text>
<rect x="94" y="583" width="1" height="25" fill="#58b890" shape-rendering="crispEdges"/>
<rect x="100" y="583" width="1" height="29" fill="#58b890" shape-rendering="crispEdges"/>
<rect x="106" y="583" width="1" height="36" fill="#58b890" shape-rendering="crispEdges"/>
<rect x="112" y="583" width="1" height="33" fill="#58b890" shape-rendering="crispEdges"/>
<rect x="118" y="583" width="1" height="40" fill="#58b890" shape-rendering="crispEdges"/>
<rect x="124" y="583" width="1" height="37" fill="#58b890" shape-rendering="crispEdges"/>
<rect x="130" y="583" width="1" height="25" fill="#58b890" shape-rendering="crispEdges"/>
<rect x="136" y="583" width="1" height="15" fill="#58b890" shape-rendering="crispEdges"/>
<rect x="142" y="583" width="1" height="3" fill="#58b890" shape-rendering="crispEdges"/>
<rect x="148" y="573" width="1" height="10" fill="#e05a68" shape-rendering="crispEdges"/>
<rect x="154" y="573" width="1" height="10" fill="#e05a68" shape-rendering="crispEdges"/>
<rect x="160" y="565" width="1" height="18" fill="#e05a68" shape-rendering="crispEdges"/>
<rect x="166" y="559" width="1" height="24" fill="#e05a68" shape-rendering="crispEdges"/>
<rect x="172" y="558" width="1" height="25" fill="#e05a68" shape-rendering="crispEdges"/>
<rect x="178" y="555" width="1" height="28" fill="#e05a68" shape-rendering="crispEdges"/>
<rect x="184" y="560" width="1" height="23" fill="#e05a68" shape-rendering="crispEdges"/>
<rect x="190" y="572" width="1" height="11" fill="#e05a68" shape-rendering="crispEdges"/>
<rect x="196" y="575" width="1" height="8" fill="#e05a68" shape-rendering="crispEdges"/>
<rect x="202" y="578" width="1" height="5" fill="#e05a68" shape-rendering="crispEdges"/>
<rect x="208" y="571" width="1" height="12" fill="#e05a68" shape-rendering="crispEdges"/>
<rect x="214" y="565" width="1" height="18" fill="#e05a68" shape-rendering="crispEdges"/>
<rect x="220" y="551" width="1" height="32" fill="#e05a68" shape-rendering="crispEdges"/>
<rect x="226" y="541" width="1" height="42" fill="#e05a68" shape-rendering="crispEdges"/>
<rect x="232" y="526" width="1" height="57" fill="#e05a68" shape-rendering="crispEdges"/>
<rect x="238" y="532" width="1" height="51" fill="#e05a68" shape-rendering="crispEdges"/>
<rect x="244" y="540" width="1" height="43" fill="#e05a68" shape-rendering="crispEdges"/>
<rect x="250" y="539" width="1" height="44" fill="#e05a68" shape-rendering="crispEdges"/>
<rect x="256" y="541" width="1" height="42" fill="#e05a68" shape-rendering="crispEdges"/>
<rect x="262" y="558" width="1" height="25" fill="#e05a68" shape-rendering="crispEdges"/>
<rect x="268" y="575" width="1" height="8" fill="#e05a68" shape-rendering="crispEdges"/>
<rect x="274" y="583" width="1" height="3" fill="#58b890" shape-rendering="crispEdges"/>
<rect x="280" y="583" width="1" height="9" fill="#58b890" shape-rendering="crispEdges"/>
<rect x="286" y="583" width="1" height="20" fill="#58b890" shape-rendering="crispEdges"/>
<rect x="292" y="583" width="1" height="24" fill="#58b890" shape-rendering="crispEdges"/>
<rect x="298" y="583" width="1" height="19" fill="#58b890" shape-rendering="crispEdges"/>
<rect x="304" y="583" width="1" height="15" fill="#58b890" shape-rendering="crispEdges"/>
<rect x="310" y="583" width="1" height="14" fill="#58b890" shape-rendering="crispEdges"/>
<rect x="316" y="583" width="1" height="12" fill="#58b890" shape-rendering="crispEdges"/>
<rect x="322" y="583" width="1" height="20" fill="#58b890" shape-rendering="crispEdges"/>
<rect x="328" y="583" width="1" height="25" fill="#58b890" shape-rendering="crispEdges"/>
<rect x="334" y="583" width="1" height="20" fill="#58b890" shape-rendering="crispEdges"/>
<rect x="340" y="583" width="1" height="14" fill="#58b890" shape-rendering="crispEdges"/>
<rect x="346" y="583" width="1" height="12" fill="#58b890" shape-rendering="crispEdges"/>
<rect x="352" y="582" width="1" height="1" fill="#e05a68" shape-rendering="crispEdges"/>
<rect x="358" y="575" width="1" height="8" fill="#e05a68" shape-rendering="crispEdges"/>
<rect x="364" y="570" width="1" height="13" fill="#e05a68" shape-rendering="crispEdges"/>
<rect x="370" y="567" width="1" height="16" fill="#e05a68" shape-rendering="crispEdges"/>
<rect x="376" y="572" width="1" height="11" fill="#e05a68" shape-rendering="crispEdges"/>
<rect x="382" y="583" width="1" height="1" fill="#58b890" shape-rendering="crispEdges"/>
<rect x="388" y="583" width="1" height="9" fill="#58b890" shape-rendering="crispEdges"/>
<rect x="394" y="583" width="1" height="13" fill="#58b890" shape-rendering="crispEdges"/>
<rect x="400" y="583" width="1" height="15" fill="#58b890" shape-rendering="crispEdges"/>
<rect x="406" y="583" width="1" height="18" fill="#58b890" shape-rendering="crispEdges"/>
<rect x="412" y="583" width="1" height="12" fill="#58b890" shape-rendering="crispEdges"/>
<rect x="418" y="583" width="1" height="7" fill="#58b890" shape-rendering="crispEdges"/>
<rect x="424" y="583" width="1" height="3" fill="#58b890" shape-rendering="crispEdges"/>
<rect x="430" y="580" width="1" height="3" fill="#e05a68" shape-rendering="crispEdges"/>
<rect x="436" y="571" width="1" height="12" fill="#e05a68" shape-rendering="crispEdges"/>
<rect x="442" y="574" width="1" height="9" fill="#e05a68" shape-rendering="crispEdges"/>
<rect x="448" y="577" width="1" height="6" fill="#e05a68" shape-rendering="crispEdges"/>
<rect x="454" y="579" width="1" height="4" fill="#e05a68" shape-rendering="crispEdges"/>
<rect x="460" y="580" width="1" height="3" fill="#e05a68" shape-rendering="crispEdges"/>
<rect x="466" y="583" width="1" height="2" fill="#58b890" shape-rendering="crispEdges"/>
<rect x="472" y="583" width="1" height="3" fill="#58b890" shape-rendering="crispEdges"/>
<rect x="478" y="579" width="1" height="4" fill="#e05a68" shape-rendering="crispEdges"/>
<rect x="484" y="580" width="1" height="3" fill="#e05a68" shape-rendering="crispEdges"/>
<rect x="490" y="582" width="1" height="1" fill="#e05a68" shape-rendering="crispEdges"/>
<rect x="496" y="583" width="1" height="4" fill="#58b890" shape-rendering="crispEdges"/>
<rect x="502" y="583" width="1" height="4" fill="#58b890" shape-rendering="crispEdges"/>
<rect x="508" y="583" width="1" height="3" fill="#58b890" shape-rendering="crispEdges"/>
<rect x="514" y="576" width="1" height="7" fill="#e05a68" shape-rendering="crispEdges"/>
<rect x="520" y="572" width="1" height="11" fill="#e05a68" shape-rendering="crispEdges"/>
<rect x="526" y="566" width="1" height="17" fill="#e05a68" shape-rendering="crispEdges"/>
<rect x="532" y="564" width="1" height="19" fill="#e05a68" shape-rendering="crispEdges"/>
<rect x="538" y="567" width="1" height="16" fill="#e05a68" shape-rendering="crispEdges"/>
<rect x="544" y="571" width="1" height="12" fill="#e05a68" shape-rendering="crispEdges"/>
<rect x="550" y="575" width="1" height="8" fill="#e05a68" shape-rendering="crispEdges"/>
<rect x="556" y="577" width="1" height="6" fill="#e05a68" shape-rendering="crispEdges"/>
<rect x="562" y="578" width="1" height="5" fill="#e05a68" shape-rendering="crispEdges"/>
<rect x="568" y="577" width="1" height="6" fill="#e05a68" shape-rendering="crispEdges"/>
<rect x="574" y="579" width="1" height="4" fill="#e05a68" shape-rendering="crispEdges"/>
<rect x="580" y="577" width="1" height="6" fill="#e05a68" shape-rendering="crispEdges"/>
<rect x="586" y="574" width="1" height="9" fill="#e05a68" shape-rendering="crispEdges"/>
<rect x="592" y="569" width="1" height="14" fill="#e05a68" shape-rendering="crispEdges"/>
<rect x="598" y="563" width="1" height="20" fill="#e05a68" shape-rendering="crispEdges"/>
<rect x="604" y="556" width="1" height="27" fill="#e05a68" shape-rendering="crispEdges"/>
<rect x="610" y="556" width="1" height="27" fill="#e05a68" shape-rendering="crispEdges"/>
<rect x="616" y="554" width="1" height="29" fill="#e05a68" shape-rendering="crispEdges"/>
<rect x="622" y="558" width="1" height="25" fill="#e05a68" shape-rendering="crispEdges"/>
<rect x="628" y="561" width="1" height="22" fill="#e05a68" shape-rendering="crispEdges"/>
<rect x="634" y="553" width="1" height="30" fill="#e05a68" shape-rendering="crispEdges"/>
<rect x="640" y="543" width="1" height="40" fill="#e05a68" shape-rendering="crispEdges"/>
<rect x="646" y="546" width="1" height="37" fill="#e05a68" shape-rendering="crispEdges"/>
<rect x="652" y="543" width="1" height="40" fill="#e05a68" shape-rendering="crispEdges"/>
<rect x="658" y="548" width="1" height="35" fill="#e05a68" shape-rendering="crispEdges"/>
<rect x="664" y="556" width="1" height="27" fill="#e05a68" shape-rendering="crispEdges"/>
<rect x="670" y="567" width="1" height="16" fill="#e05a68" shape-rendering="crispEdges"/>
<rect x="676" y="577" width="1" height="6" fill="#e05a68" shape-rendering="crispEdges"/>
<rect x="682" y="583" width="1" height="5" fill="#58b890" shape-rendering="crispEdges"/>
<rect x="688" y="583" width="1" height="15" fill="#58b890" shape-rendering="crispEdges"/>
<rect x="694" y="583" width="1" height="22" fill="#58b890" shape-rendering="crispEdges"/>
<rect x="700" y="583" width="1" height="31" fill="#58b890" shape-rendering="crispEdges"/>
<rect x="706" y="583" width="1" height="33" fill="#58b890" shape-rendering="crispEdges"/>
<rect x="712" y="583" width="1" height="35" fill="#58b890" shape-rendering="crispEdges"/>
<rect x="718" y="583" width="1" height="37" fill="#58b890" shape-rendering="crispEdges"/>
<rect x="724" y="583" width="1" height="35" fill="#58b890" shape-rendering="crispEdges"/>
<rect x="730" y="583" width="1" height="35" fill="#58b890" shape-rendering="crispEdges"/>
<rect x="736" y="583" width="1" height="33" fill="#58b890" shape-rendering="crispEdges"/>
<rect x="742" y="583" width="1" height="37" fill="#58b890" shape-rendering="crispEdges"/>
<rect x="748" y="583" width="1" height="40" fill="#58b890" shape-rendering="crispEdges"/>
<rect x="754" y="583" width="1" height="39" fill="#58b890" shape-rendering="crispEdges"/>
<rect x="760" y="583" width="1" height="30" fill="#58b890" shape-rendering="crispEdges"/>
<rect x="766" y="583" width="1" height="21" fill="#58b890" shape-rendering="crispEdges"/>
<rect x="772" y="583" width="1" height="20" fill="#58b890" shape-rendering="crispEdges"/>
<rect x="778" y="583" width="1" height="19" fill="#58b890" shape-rendering="crispEdges"/>
<rect x="784" y="583" width="1" height="18" fill="#58b890" shape-rendering="crispEdges"/>
<rect x="790" y="583" width="1" height="16" fill="#58b890" shape-rendering="crispEdges"/>
<rect x="796" y="583" width="1" height="12" fill="#58b890" shape-rendering="crispEdges"/>
<rect x="802" y="583" width="1" height="7" fill="#58b890" shape-rendering="crispEdges"/>
<rect x="808" y="583" width="1" height="2" fill="#58b890" shape-rendering="crispEdges"/>
<rect x="814" y="583" width="1" height="7" fill="#58b890" shape-rendering="crispEdges"/>
<rect x="820" y="583" width="1" height="8" fill="#58b890" shape-rendering="crispEdges"/>
<rect x="826" y="583" width="1" height="13" fill="#58b890" shape-rendering="crispEdges"/>
<rect x="832" y="583" width="1" height="15" fill="#58b890" shape-rendering="crispEdges"/>
<rect x="838" y="583" width="1" height="14" fill="#58b890" shape-rendering="crispEdges"/>
<rect x="844" y="583" width="1" height="11" fill="#58b890" shape-rendering="crispEdges"/>
<rect x="850" y="583" width="1" height="14" fill="#58b890" shape-rendering="crispEdges"/>
<rect x="856" y="583" width="1" height="17" fill="#58b890" shape-rendering="crispEdges"/>
<rect x="862" y="583" width="1" height="23" fill="#58b890" shape-rendering="crispEdges"/>
<rect x="868" y="583" width="1" height="27" fill="#58b890" shape-rendering="crispEdges"/>
<rect x="874" y="583" width="1" height="23" fill="#58b890" shape-rendering="crispEdges"/>
<rect x="90" y="615.85" width="851" height="1.3" fill="#dcf5f5" />
<rect x="90" y="627.85" width="851" height="1.3" fill="#dcf5f5" />
<circle cx="682" cy="616" r="5" fill="#1a1a1a" stroke="#f4f4f4" stroke-width="1.3"/>
<circle cx="802" cy="616" r="5" fill="#1a1a1a" stroke="#f4f4f4" stroke-width="1.3"/>
<path d="M94.6 616.7 L110 627.5 L128 640.3 L138.3 642.9 L156.3 639 L182 626.2 L207.8 621 L220.6 614.6 L238.6 595.3 L256.6 578.6 L269.5 574.7 L282.9 577.8 L300.9 583.7 L321.4 589.7 L336.9 596.6 L347.2 599.2 L360 596.6 L372.9 593.2 L383.2 593.2 L398.6 596.6 L411.5 600.5 L424.3 601.2 L437.2 599.2 L455.2 597.4 L475.8 597.4 L491.2 596.6 L506.6 597.4 L519.5 595.3 L535.4 588.9 L550.9 586.3 L571.4 583.7 L592 578.6 L610 568.3 L628 559.3 L643.5 547.7 L658.9 536.2 L671.8 532.3 L679.5 531.8 L689.8 533.6 L705.2 543.9 L725.8 558 L743.8 570.4 L759.2 582.4 L772 588.1 L781.9 591.5 L797.3 596.6 L812.7 597.4 L825.6 599.2 L838.4 603 L853.9 607.7 L864.2 612 L873.2 615.9" fill="none" stroke="#e0e024" stroke-width="1" stroke-linejoin="round" shape-rendering="crispEdges"/>
<path d="M94.6 628.7 L107.5 641.6 L117.7 651.9 L125.5 654.5 L135.7 650.6 L148.6 636.5 L153.7 636 L166.6 623.6 L179.5 613.8 L184.6 613.3 L192.3 618.5 L202.6 620.5 L212.9 612 L225.8 590.2 L232.2 573.4 L243.8 568.3 L256.6 558.8 L261.8 560.6 L270 571.6 L280.3 582.4 L291.9 594 L298.3 592.2 L309.9 593.2 L316.3 592.2 L331.7 607.7 L340.7 605.1 L347.2 604.3 L360 592.7 L371.6 586.3 L375.5 586.8 L385.7 595.8 L406.3 608.2 L414 605.6 L426.9 601.7 L437.2 594 L447.5 594 L460.3 596.6 L470.6 598.4 L478.3 595.3 L488.6 595.3 L496.3 599.2 L507.9 597.9 L516.9 591.5 L530.3 582.4 L538 580.4 L550.9 582.4 L563.7 582.4 L579.2 579.9 L592 572.2 L604.9 559.3 L615.2 552.9 L628 549 L634.5 541.3 L640.9 531 L648.6 525.9 L653.7 520.7 L664 520.2 L676.9 528.4 L687.2 540 L700 554.2 L712.9 566.5 L725.8 573.4 L738.6 582.4 L746.3 591.5 L754 597.9 L758.7 597.9 L766.4 595.3 L784.4 602.5 L792.2 602.5 L807.6 597.4 L817.9 600.5 L833.3 610.7 L846.2 609.5 L853.9 614.6 L866.7 626.2 L873.9 628" fill="none" stroke="#f2f2f2" stroke-width="1" stroke-linejoin="round" shape-rendering="crispEdges"/>
<text x="940.5" y="612.5" fill="#fff" font-size="12" text-anchor="end" >-1.13</text>
<text x="940.5" y="624.5" fill="#fff" font-size="12" text-anchor="end" >-1.54</text>
<rect x="942" y="596" width="67" height="16" fill="#000" />
<text x="944" y="608.5" fill="#f0a030" font-size="12" >-0.42</text>
<rect x="942" y="617" width="67" height="16" fill="#1878c8" />
<text x="944" y="629.5" fill="#fff" font-size="12" >-0.00</text>
<text x="92.5" y="511.5" fill="#e6e6e6" font-size="12" textLength="84.5" lengthAdjust="spacingAndGlyphs" >MACD(26,12,9)</text>
<text x="182.5" y="511.5" fill="#e6e6e6" font-size="12" textLength="56" lengthAdjust="spacingAndGlyphs" >DIFF:-1.50</text>
<text x="247.5" y="511.5" fill="#d8d820" font-size="12" textLength="55" lengthAdjust="spacingAndGlyphs" >DEA:-1.13</text>
<text x="311.5" y="511.5" fill="#e030e0" font-size="12" textLength="69" lengthAdjust="spacingAndGlyphs" >MACD:-0.74</text>
<g><g stroke="#f01010" stroke-width="1"><path d="M29 498 V500.3 M29 509.7 V512 M22 505 H24.3 M33.7 505 H36 M24.2 500.2 L25.8 501.8 M32.2 508.2 L33.8 509.8 M24.2 509.8 L25.8 508.2 M32.2 501.8 L33.8 500.2"/></g><circle cx="29" cy="505" r="3.3" fill="#fff"/><circle cx="29" cy="505" r="1.9" fill="#f01010"/></g>
<line x1="90" y1="677.5" x2="941" y2="677.5" stroke="#424242" stroke-width="1" stroke-dasharray="3 3" shape-rendering="crispEdges"/>
<line x1="91" y1="703.5" x2="942" y2="703.5" stroke="rgba(255,255,255,0.12)" stroke-width="1" stroke-dasharray="1 2" shape-rendering="crispEdges"/>
<line x1="91" y1="729.5" x2="942" y2="729.5" stroke="rgba(255,255,255,0.12)" stroke-width="1" stroke-dasharray="1 2" shape-rendering="crispEdges"/>
<line x1="91" y1="755.5" x2="942" y2="755.5" stroke="rgba(255,255,255,0.12)" stroke-width="1" stroke-dasharray="1 2" shape-rendering="crispEdges"/>
<text x="87" y="681" fill="#f0f0f0" font-size="12" text-anchor="end" textLength="30.45" lengthAdjust="spacingAndGlyphs" >75.28</text>
<text x="944.5" y="681" fill="#f0f0f0" font-size="12" textLength="30.45" lengthAdjust="spacingAndGlyphs" >75.28</text>
<text x="87" y="707" fill="#f0f0f0" font-size="12" text-anchor="end" textLength="30.45" lengthAdjust="spacingAndGlyphs" >64.32</text>
<text x="944.5" y="707" fill="#f0f0f0" font-size="12" textLength="30.45" lengthAdjust="spacingAndGlyphs" >64.32</text>
<text x="87" y="733" fill="#f0f0f0" font-size="12" text-anchor="end" textLength="30.45" lengthAdjust="spacingAndGlyphs" >53.36</text>
<text x="944.5" y="733" fill="#f0f0f0" font-size="12" textLength="30.45" lengthAdjust="spacingAndGlyphs" >53.36</text>
<text x="87" y="759" fill="#f0f0f0" font-size="12" text-anchor="end" textLength="30.45" lengthAdjust="spacingAndGlyphs" >42.40</text>
<text x="944.5" y="759" fill="#f0f0f0" font-size="12" textLength="30.45" lengthAdjust="spacingAndGlyphs" >42.40</text>
<rect x="90" y="770.85" width="851" height="1.3" fill="#dcf5f5" />
<text x="92.5" y="670" fill="#e6e6e6" font-size="12" textLength="73.8" lengthAdjust="spacingAndGlyphs" >RSI(14,14,14)</text>
<text x="172.4" y="670" fill="#e6e6e6" font-size="12" textLength="58.3" lengthAdjust="spacingAndGlyphs" >RSI1:36.45</text>
<text x="240" y="670" fill="#d8d820" font-size="12" textLength="58.5" lengthAdjust="spacingAndGlyphs" >RSI2:36.45</text>
<text x="307.5" y="670" fill="#e030e0" font-size="12" textLength="59" lengthAdjust="spacingAndGlyphs" >RSI3:36.45</text>
<text x="940.5" y="768" fill="#fff" font-size="12" text-anchor="end" >35.65</text>
<rect x="942" y="771" width="67" height="13" fill="#000" />
<text x="945" y="782" fill="#f0a030" font-size="12" >37.35</text>
<text x="34.3" y="797" fill="#ff700c" font-size="12.5" font-weight="bold" textLength="25" lengthAdjust="spacingAndGlyphs" >日线</text>
<path d="M65 796.5 L69.5 788.5 L74 796.5 Z" fill="#ff7a1a"/>
<text x="210.3" y="794" fill="#f4f4f4" font-size="12" font-weight="bold" textLength="45" lengthAdjust="spacingAndGlyphs" >2024/10</text>
<rect x="339" y="782" width="42" height="15" fill="#000" />
<text x="342.5" y="794" fill="#f0a030" font-size="12" textLength="37" lengthAdjust="spacingAndGlyphs" >星期三</text>
<text x="382" y="794" fill="#f4f4f4" font-size="12" font-weight="bold" >I1</text>
<rect x="430" y="782" width="108.5" height="15" fill="#000" />
<text x="432" y="794" fill="#f0a030" font-size="12" textLength="104" lengthAdjust="spacingAndGlyphs" >2024/11/21 星期四</text>
<text x="600.2" y="794" fill="#f4f4f4" font-size="12" font-weight="bold" textLength="44" lengthAdjust="spacingAndGlyphs" >2025/01</text>
<rect x="656" y="782" width="107" height="15" fill="#000" />
<text x="658" y="794" fill="#f0a030" font-size="12" textLength="104" lengthAdjust="spacingAndGlyphs" >2025/01/16 星期四</text>
<rect x="765.5" y="782" width="24.5" height="17" fill="#1878c8" />
<rect x="680.5" y="798" width="109.5" height="2" fill="#1878c8" />
<text x="766" y="794" fill="#fff" font-size="12" textLength="24" lengthAdjust="spacingAndGlyphs" >期三</text>
<rect x="801" y="781" width="109" height="20" fill="#1878c8" />
<text x="803.5" y="795" fill="#fff" font-size="12" textLength="104" lengthAdjust="spacingAndGlyphs" >2025/02/19 星期三</text>
<rect x="911" y="783" width="26" height="14" fill="#000" />
<text x="911.5" y="794" fill="#f0a030" font-size="12" textLength="25" lengthAdjust="spacingAndGlyphs" >期三</text>
<path d="M94.6 772.3 L101 772.3 L106.7 776.4 L112.6 772 L119 780.5 L124.9 773.3 L130.6 759.7 L137 759.2 L142.9 748.9 L148.6 745 L154.3 756.1 L160.2 743 L166.1 741.2 L172.3 745.5 L178.2 739.4 L184.6 752.2 L190.3 764.3 L196.2 755.3 L202.1 757.4 L208.3 738.6 L214.2 736.8 L220.6 720.6 L226.3 716.2 L232.4 702.6 L238.6 725.7 L244.5 729.6 L250.7 718 L256.6 719.3 L262.5 741.2 L268.5 745 L274.6 747.1 L280.3 747.1 L286.7 757.1 L292.6 749.7 L298.8 740.4 L304.7 742.4 L310.6 747.1 L316.8 737.3 L322.7 759.2 L328.6 761.2 L334.3 750.7 L340.5 740.4 L346.4 747.1 L352.3 732.7 L358.2 730.4 L364.1 731.1 L370.3 729.6 L376.2 742.4 L382.4 756.1 L388.3 757.4 L394.2 756.1 L400.4 751.5 L406.3 762.3 L412.2 744.5 L418.4 743.2 L424.3 745 L430.2 736.8 L436.4 727.5 L442.3 743.7 L448.2 745 L454.4 747.1 L460.3 745 L466.8 752.7 L472.7 751.5 L478.3 733.4 L484.2 744.5 L490.7 747.1 L496.3 758.4 L502.8 747.1 L508.7 743.7 L514.3 726.5 L520.3 730.1 L526.4 721.4 L531.6 725 L538 733.4 L544.4 737.8 L550.3 740.4 L556.5 736.5 L562.4 737.3 L568.4 730.1 L574.5 736.5 L580.4 729.6 L586.4 719.3 L592.5 711.6 L598.4 701.3 L604.4 693.6 L610.5 703.1 L616.5 696.7 L622.9 711.1 L628.5 702.6 L634.5 688.4 L640.9 678.7 L646.5 700.5 L652.5 689.7 L658.9 702.6 L664 707.7 L670.5 716.7 L676.9 721.9 L682 725.7 L688.5 736.5 L694.4 733.4 L700.6 746.3 L706.5 738.6 L712.9 746.3 L718.6 744.5 L724.5 738.6 L730.9 751.5 L736.6 747.6 L743 760.5 L748.4 764.3 L754.6 758.4 L760.5 745 L766.4 737.8 L772.6 752.7 L778 750.2 L784.4 758.4 L790.1 749.7 L797.3 744.5 L802.4 741.9 L808.4 737.8 L814.5 758.4 L820.4 751.5 L826.9 764.3 L832.8 767.4 L839 752.2 L844.9 754.8 L850.8 765.1 L856.5 768.2 L862.9 779.7 L868.8 779.7 L874.5 772" fill="none" stroke="#e838e8" stroke-width="1" stroke-linejoin="round" shape-rendering="crispEdges"/>
<g clip-path="url(#cb)">
<text x="797" y="812" fill="#ddd" font-size="12" >00:00</text>
<text x="851" y="812" fill="#ddd" font-size="12" >24:00</text>
<text x="929" y="812" fill="#ddd" font-size="12" >24</text>
</g>
<rect x="20" y="802" width="785" height="15" fill="#000" />
<rect x="100" y="801" width="57" height="16" fill="#ff6a00" />
<text x="40" y="813.5" fill="#f0f0f0" font-size="12" text-anchor="middle" style="font-family:'Liberation Serif','Noto Serif CJK SC',serif" >指标</text>
<text x="80" y="813.5" fill="#f0f0f0" font-size="12" text-anchor="middle" style="font-family:'Liberation Serif','Noto Serif CJK SC',serif" >模板</text>
<text x="128.7" y="813.5" fill="#fff" font-size="12" text-anchor="middle" textLength="41.5" lengthAdjust="spacingAndGlyphs" style="font-family:'Liberation Serif','Noto Serif CJK SC',serif" >VIP指标</text>
<text x="194.5" y="812.8" fill="#c8c8c8" font-size="12" text-anchor="middle" textLength="60" lengthAdjust="spacingAndGlyphs" style="font-family:'Liberation Serif','Noto Serif CJK SC',serif" >BARUPDN_UD</text>
<text x="262.5" y="812.8" fill="#c8c8c8" font-size="12" text-anchor="middle" textLength="42" lengthAdjust="spacingAndGlyphs" style="font-family:'Liberation Serif','Noto Serif CJK SC',serif" >BIAS_UD</text>
<text x="320.5" y="812.8" fill="#c8c8c8" font-size="12" text-anchor="middle" textLength="42" lengthAdjust="spacingAndGlyphs" style="font-family:'Liberation Serif','Noto Serif CJK SC',serif" >BOLL_UD</text>
<text x="375.5" y="812.8" fill="#c8c8c8" font-size="12" text-anchor="middle" textLength="36" lengthAdjust="spacingAndGlyphs" style="font-family:'Liberation Serif','Noto Serif CJK SC',serif" >CCI_UD</text>
<text x="427.5" y="812.8" fill="#c8c8c8" font-size="12" text-anchor="middle" textLength="36" lengthAdjust="spacingAndGlyphs" style="font-family:'Liberation Serif','Noto Serif CJK SC',serif" >DMI_UD</text>
<text x="488.5" y="812.8" fill="#c8c8c8" font-size="12" text-anchor="middle" textLength="54" lengthAdjust="spacingAndGlyphs" style="font-family:'Liberation Serif','Noto Serif CJK SC',serif" >INSIDE_UD</text>
<text x="546.5" y="812.8" fill="#c8c8c8" font-size="12" text-anchor="middle" textLength="30" lengthAdjust="spacingAndGlyphs" style="font-family:'Liberation Serif','Noto Serif CJK SC',serif" >KD_UD</text>
<text x="595.5" y="812.8" fill="#c8c8c8" font-size="12" text-anchor="middle" textLength="36" lengthAdjust="spacingAndGlyphs" style="font-family:'Liberation Serif','Noto Serif CJK SC',serif" >KDJ_UD</text>
<text x="644" y="812.8" fill="#c8c8c8" font-size="12" text-anchor="middle" textLength="30" lengthAdjust="spacingAndGlyphs" style="font-family:'Liberation Serif','Noto Serif CJK SC',serif" >MA_UD</text>
<text x="696" y="812.8" fill="#c8c8c8" font-size="12" text-anchor="middle" textLength="42" lengthAdjust="spacingAndGlyphs" style="font-family:'Liberation Serif','Noto Serif CJK SC',serif" >MACD_UD</text>
<text x="751" y="812.8" fill="#c8c8c8" font-size="12" text-anchor="middle" textLength="36" lengthAdjust="spacingAndGlyphs" style="font-family:'Liberation Serif','Noto Serif CJK SC',serif" >MTM_UD</text>
<text x="792" y="812.8" fill="#c8c8c8" font-size="12" text-anchor="middle" textLength="12" lengthAdjust="spacingAndGlyphs" style="font-family:'Liberation Serif','Noto Serif CJK SC',serif" >&gt;&gt;</text>
<rect x="59" y="803" width="1" height="14" fill="#262626" />
<rect x="157" y="803" width="1" height="14" fill="#383838" />
<rect x="233" y="803" width="1" height="14" fill="#383838" />
<rect x="292" y="803" width="1" height="14" fill="#383838" />
<rect x="350" y="803" width="1" height="14" fill="#383838" />
<rect x="401" y="803" width="1" height="14" fill="#383838" />
<rect x="453" y="803" width="1" height="14" fill="#383838" />
<rect x="523" y="803" width="1" height="14" fill="#383838" />
<rect x="569" y="803" width="1" height="14" fill="#383838" />
<rect x="621" y="803" width="1" height="14" fill="#383838" />
<rect x="667" y="803" width="1" height="14" fill="#383838" />
<rect x="726" y="803" width="1" height="14" fill="#383838" />
<rect x="777" y="803" width="1" height="14" fill="#383838" />
<text x="881.8" y="791.8" fill="#ececec" font-size="31" textLength="98.8" lengthAdjust="spacing" opacity="0.93">FX678</text>
</svg>
</body></html>
